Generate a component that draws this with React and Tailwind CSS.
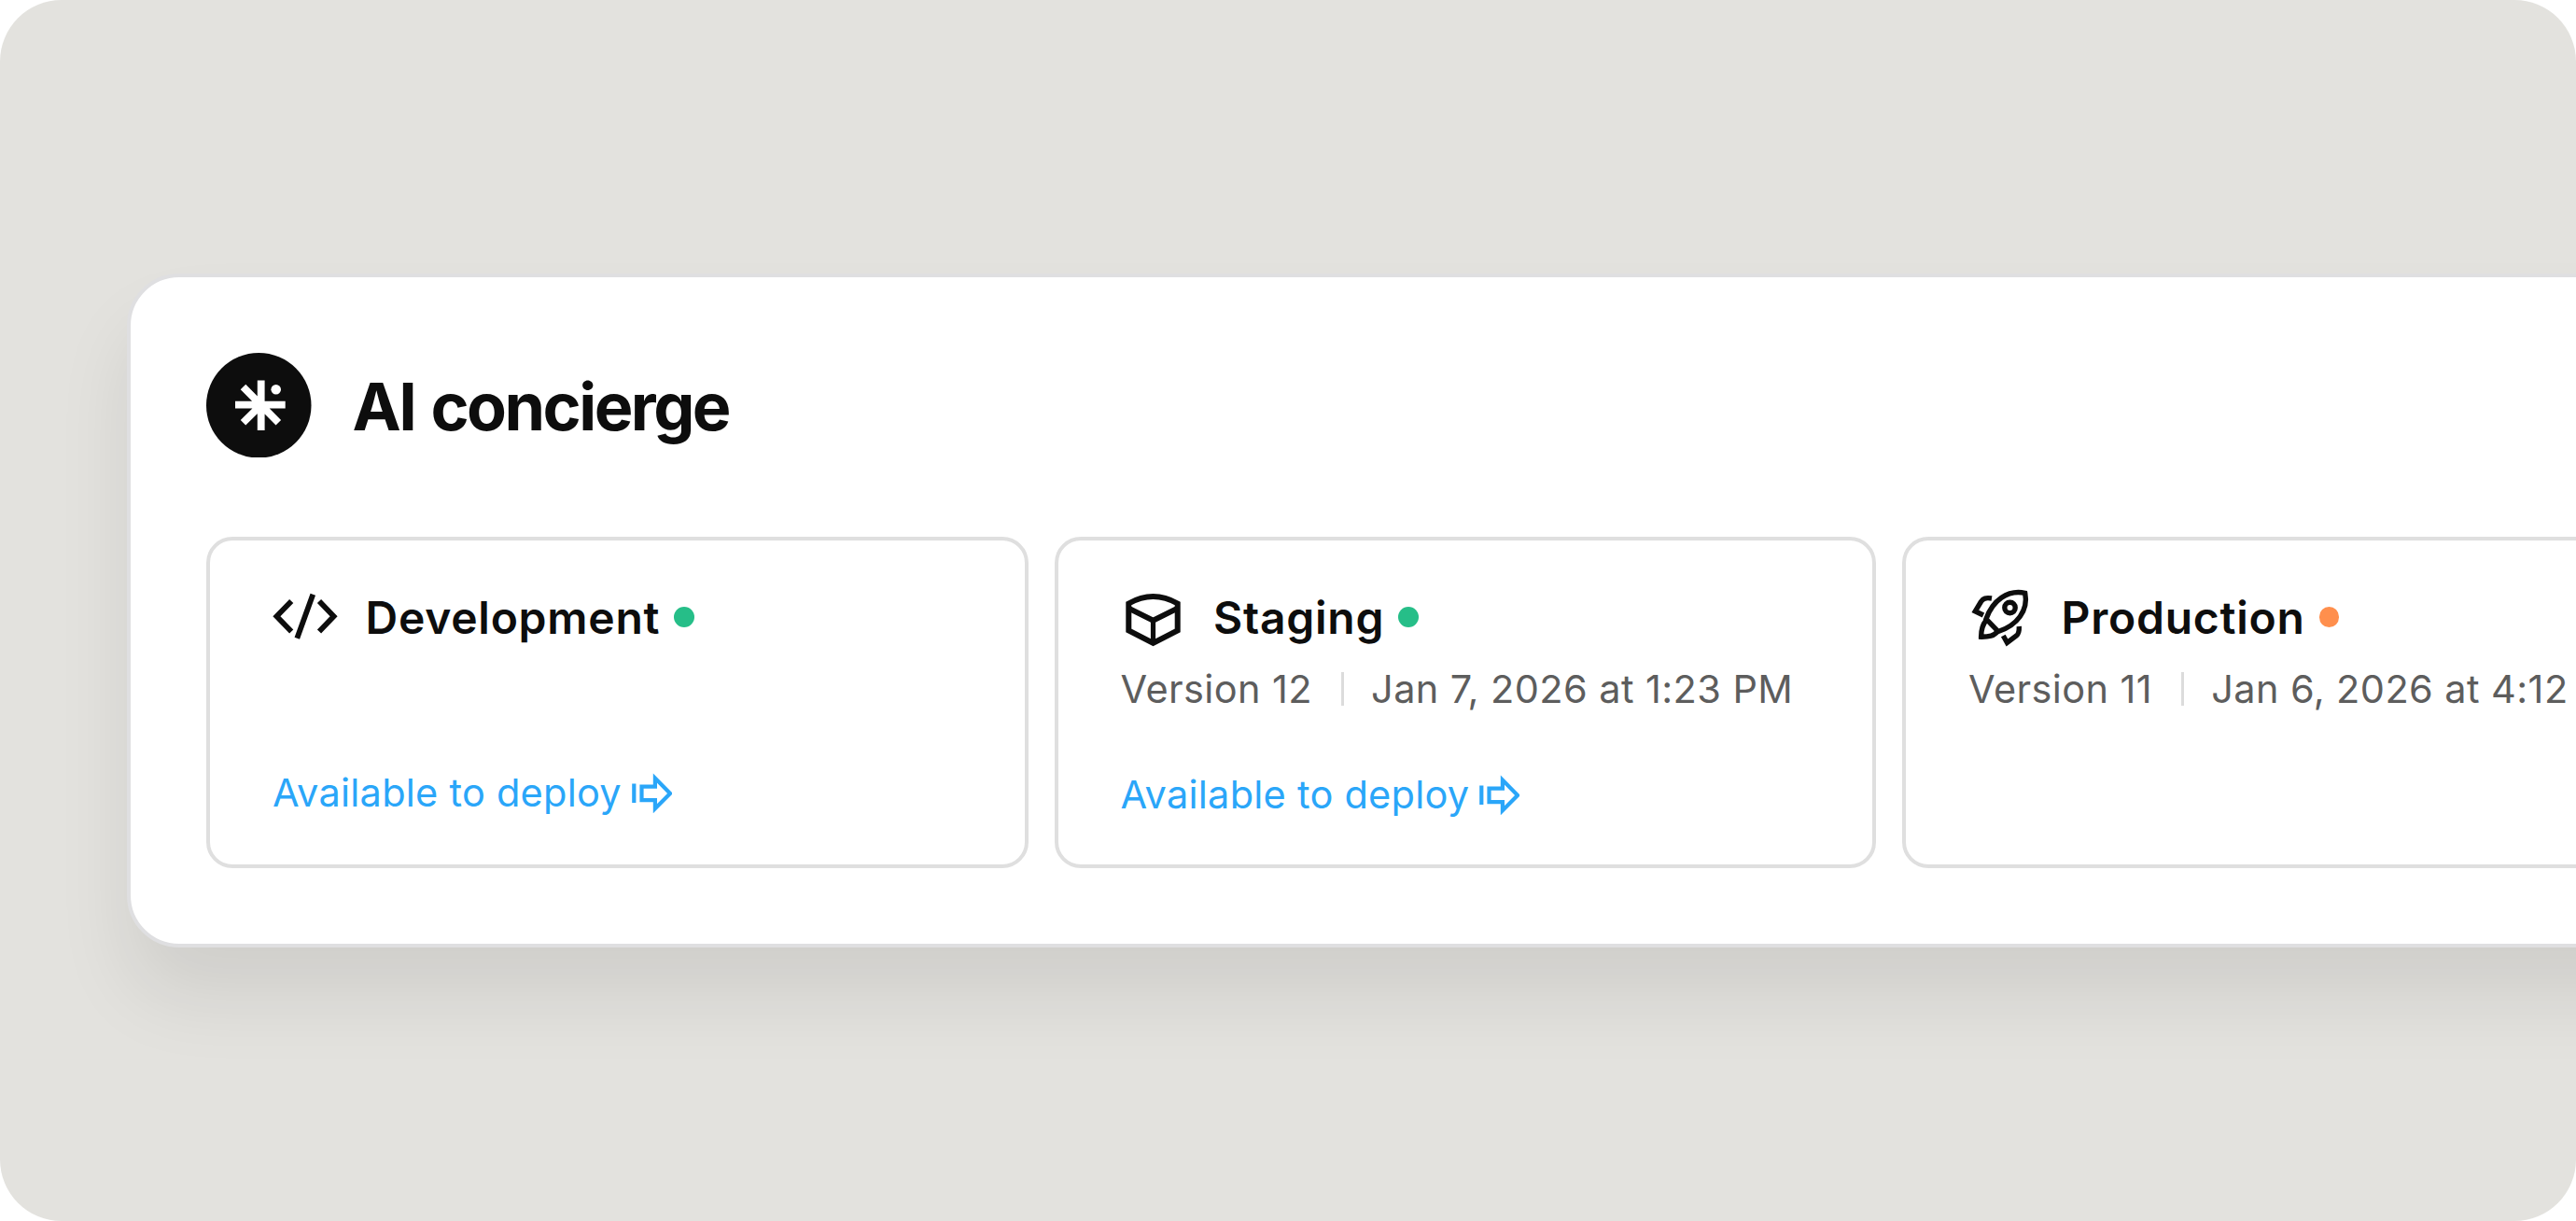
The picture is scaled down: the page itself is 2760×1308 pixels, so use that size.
import React from "react";

const StarIcon = () => (
  <svg viewBox="0 0 112.5 112.5" className="h-[112.5px] w-[112.5px] shrink-0">
    <circle cx="56.25" cy="56.25" r="56.25" fill="#0d0d0d" />
    <path d="M58.7 29.5V83M31 55.700H84.700M39.500 36.500L77.300 74.800M39.500 74.800L58 56.500" stroke="#fff" strokeWidth="7.8" />
    <circle cx="74.700" cy="39.300" r="5.300" fill="#fff" />
  </svg>
);

const CodeIcon = () => (
  <svg viewBox="0 0 70 70" className="h-[70px] w-[70px] shrink-0" fill="none" stroke="#0d0d0d" strokeWidth="5.800">
    <path d="M20.200 18L4.400 34.300L20.200 50.600M50 18L65.600 34.300L50 50.600M43.300 10.700L26.300 57.700" />
  </svg>
);

const CubeIcon = () => (
  <svg viewBox="0 0 70 70" className="h-[70px] w-[70px] shrink-0" fill="none" stroke="#0d0d0d" strokeWidth="6">
    <path d="M8.300 20.500Q34.500 5.500 60.700 20.500V49.500L34.500 62.900L8.300 49.500Z" />
    <path d="M8.300 25.600L34.500 38.600L60.700 25.600" />
    <path d="M34.500 38.600V62" strokeWidth="5.200" />
  </svg>
);

const RocketIcon = () => (
  <svg viewBox="0 0 70 70" className="h-[70px] w-[70px] shrink-0" fill="none" stroke="#0d0d0d" strokeWidth="5.400">
    <path d="M19 37C26 17 42 5.500 60.700 9.300C64.500 28 52 44 32 50.500Z" />
    <circle cx="44.500" cy="25" r="5.700" />
    <path d="M19 38.500C14.500 44 13.600 49 13.600 56.200C22 56.300 27.500 55.500 31 50.500" />
    <path d="M25 15C18.500 14 16 15 13.500 18.500L7.300 28.800L16 33" />
    <path d="M37.300 55L41.500 62.500L51.500 55C54.500 52.500 54.500 49 54.300 45" />
  </svg>
);

const DeployIcon = () => (
  <svg viewBox="0 0 44 44" className="h-11 w-11 shrink-0" fill="none" stroke="#2aa6f9" strokeWidth="4.200">
    <path d="M3.300 12.500V33M11.500 15.600H25.900V6.600L42 23L25.900 39.200V30.200H11.500Z" />
  </svg>
);

const environments = [
  { name: "Development", icon: CodeIcon, dot: "bg-[#26be88]", deploy: true },
  { name: "Staging", icon: CubeIcon, dot: "bg-[#26be88]", version: "Version 12", date: "Jan 7, 2026 at 1:23 PM", deploy: true },
  { name: "Production", icon: RocketIcon, dot: "bg-[#ff8f4d]", version: "Version 11", date: "Jan 6, 2026 at 4:12" },
];

const EnvironmentCard = ({ env }) => {
  const Icon = env.icon;
  return (
    <div className="flex h-[355px] w-[880.5px] shrink-0 flex-col rounded-[28px] border-4 border-[#dfdfdf] px-[67px] pt-[47px]">
      <div className="flex h-[70px] items-center">
        <Icon />
        <span className="ml-[29.5px] pt-px text-[48px] font-semibold tracking-[0.75px] text-[#0d0d0d]">{env.name}</span>
        <span className={`ml-[15px] h-[21.5px] w-[21.5px] rounded-full ${env.dot}`} />
      </div>
      {env.version && (
        <div className="mt-[12px] flex h-[60px] items-center whitespace-nowrap text-[41.5px] tracking-[0.4px] text-[#5d5d5d]">
          <span>{env.version}</span>
          <span className="ml-[31px] mr-[29px] h-9 w-[3px] bg-[#dcdcdc]" />
          <span>{env.date}</span>
        </div>
      )}
      {env.deploy && (
        <div className={`flex h-[60px] items-center text-[41.5px] tracking-[0.25px] text-[#2aa6f9] ${env.version ? "mt-[53px]" : "mt-[123px]"}`}>
          <span>Available to deploy</span>
          <span className="ml-[10px]"><DeployIcon /></span>
        </div>
      )}
    </div>
  );
};

const App = () => (
  <div className="h-[1308px] w-[2760px] overflow-hidden bg-white font-['Inter',sans-serif]">
    <div className="h-full overflow-hidden rounded-[66px] bg-[#e3e2de] pt-[293px] pl-[136px]">
      <div className="h-[722px] w-[2860px] rounded-[56px] border-4 border-[#dfdfe1] bg-white pt-[80.5px] pl-[81px] shadow-[0_54px_84px_-4px_rgba(0,0,0,0.09)]">
        <div className="flex h-[112.5px] items-center gap-11">
          <StarIcon />
          <h1 className="pt-[3px] text-[70px] font-bold tracking-[-0.036em] [word-spacing:3px] text-[#0d0d0d]">AI concierge</h1>
        </div>
        <div className="mt-[85px] flex gap-7">
          {environments.map((env) => <EnvironmentCard key={env.name} env={env} />)}
        </div>
      </div>
    </div>
  </div>
);

export default App;
